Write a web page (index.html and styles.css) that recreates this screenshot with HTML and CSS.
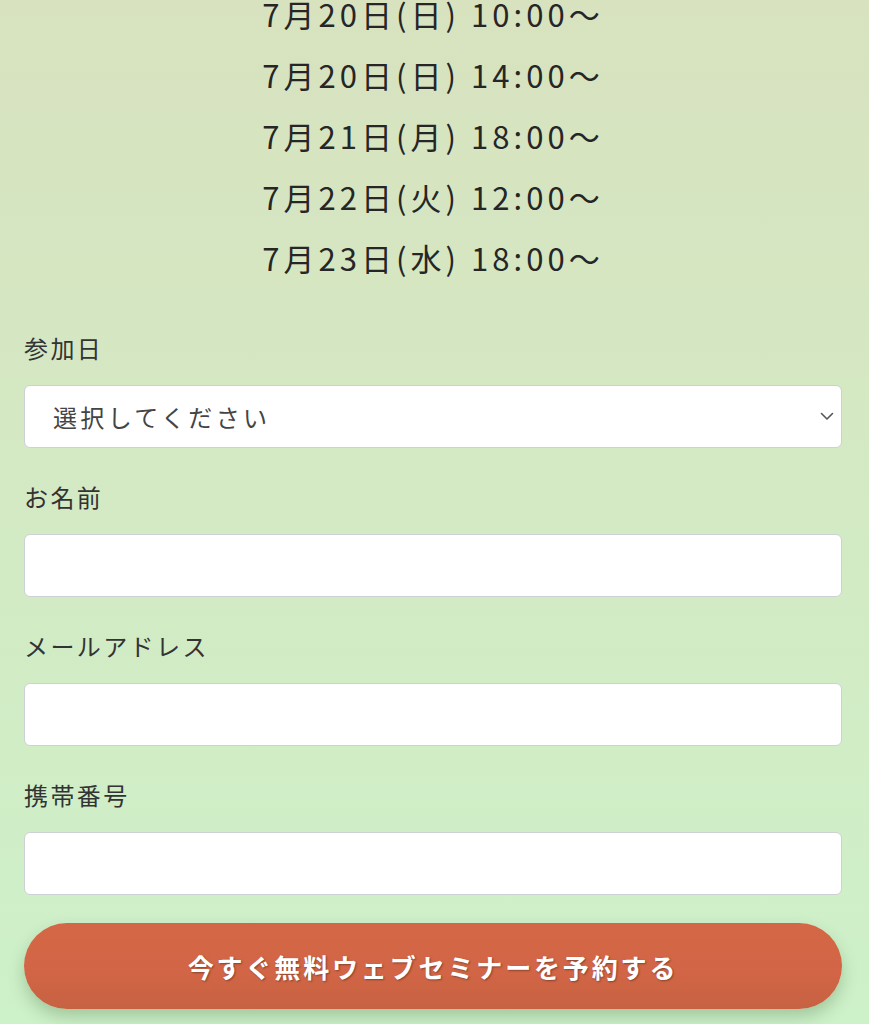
FILE: index.html
```html
<!DOCTYPE html>
<html lang="ja">
<head>
<meta charset="utf-8">
<title>予約フォーム</title>
<link rel="stylesheet" href="styles.css">
</head>
<body>
<main class="page">
  <ul class="dates">
    <li>7月20日(日) 10:00〜</li>
    <li>7月20日(日) 14:00〜</li>
    <li>7月21日(月) 18:00〜</li>
    <li>7月22日(火) 12:00〜</li>
    <li>7月23日(水) 18:00〜</li>
  </ul>
  <form class="form">
    <div class="fields">
      <div class="field">
        <label class="label">参加日</label>
        <div class="select-wrap">
          <div class="box select">選択してください</div>
          <svg class="chevron" width="14" height="9" viewBox="0 0 14 9"><path d="M1.5 1.5 L7 7 L12.5 1.5" fill="none" stroke="#555" stroke-width="1.6" stroke-linecap="round" stroke-linejoin="round"/></svg>
        </div>
      </div>
      <div class="field">
        <label class="label">お名前</label>
        <div class="box"></div>
      </div>
      <div class="field">
        <label class="label">メールアドレス</label>
        <div class="box"></div>
      </div>
      <div class="field">
        <label class="label">携帯番号</label>
        <div class="box"></div>
      </div>
    </div>
    <button type="button" class="submit">今すぐ無料ウェブセミナーを予約する</button>
  </form>
</main>
</body>
</html>
```
FILE: styles.css
```css
html, body {
  margin: 0;
  padding: 0;
  height: 100%;
}
body {
  background: linear-gradient(to bottom, #d8e2bf 0%, #d3eac4 50%, #cdf1c9 100%);
  font-family: "Noto Sans CJK JP", "Noto Sans", sans-serif;
  overflow: hidden;
}
.page {
  padding: 0 27px 0 24px;
}
.dates {
  list-style: none;
  margin: -17px 0 0;
  padding: 0;
  text-align: center;
  font-size: 31px;
  line-height: 61px;
  letter-spacing: 0.13em;
  color: #262626;
}
.form {
  margin-top: 42px;
  display: flex;
  flex-direction: column;
}
.fields {
  display: flex;
  flex-direction: column;
  gap: 31px;
}
.field {
  display: flex;
  flex-direction: column;
  gap: 19px;
}
.label {
  font-size: 24px;
  line-height: 36px;
  letter-spacing: 0.1em;
  color: #333;
}
.box {
  height: 61px;
  background: #fff;
  border: 1px solid #cdd0d4;
  border-radius: 6px;
}
.select-wrap {
  position: relative;
}
.select {
  display: flex;
  align-items: center;
  padding-left: 28px;
  font-size: 24px;
  letter-spacing: 0.14em;
  color: #444;
}
.chevron {
  position: absolute;
  right: 8px;
  top: 27px;
}
.submit {
  margin-top: 28px;
  height: 86px;
  border: none;
  border-radius: 43px;
  background: linear-gradient(to bottom, #d46746 0%, #d16545 60%, #c66242 100%);
  color: #fff;
  font-family: "Noto Sans CJK JP", "Noto Sans", sans-serif;
  font-weight: 700;
  font-size: 26px;
  letter-spacing: 0.11em;
  text-shadow: 1px 1px 2px rgba(0, 0, 0, 0.35);
  box-shadow: 0 8px 16px rgba(40, 80, 30, 0.25);
  padding: 0;
}
```
